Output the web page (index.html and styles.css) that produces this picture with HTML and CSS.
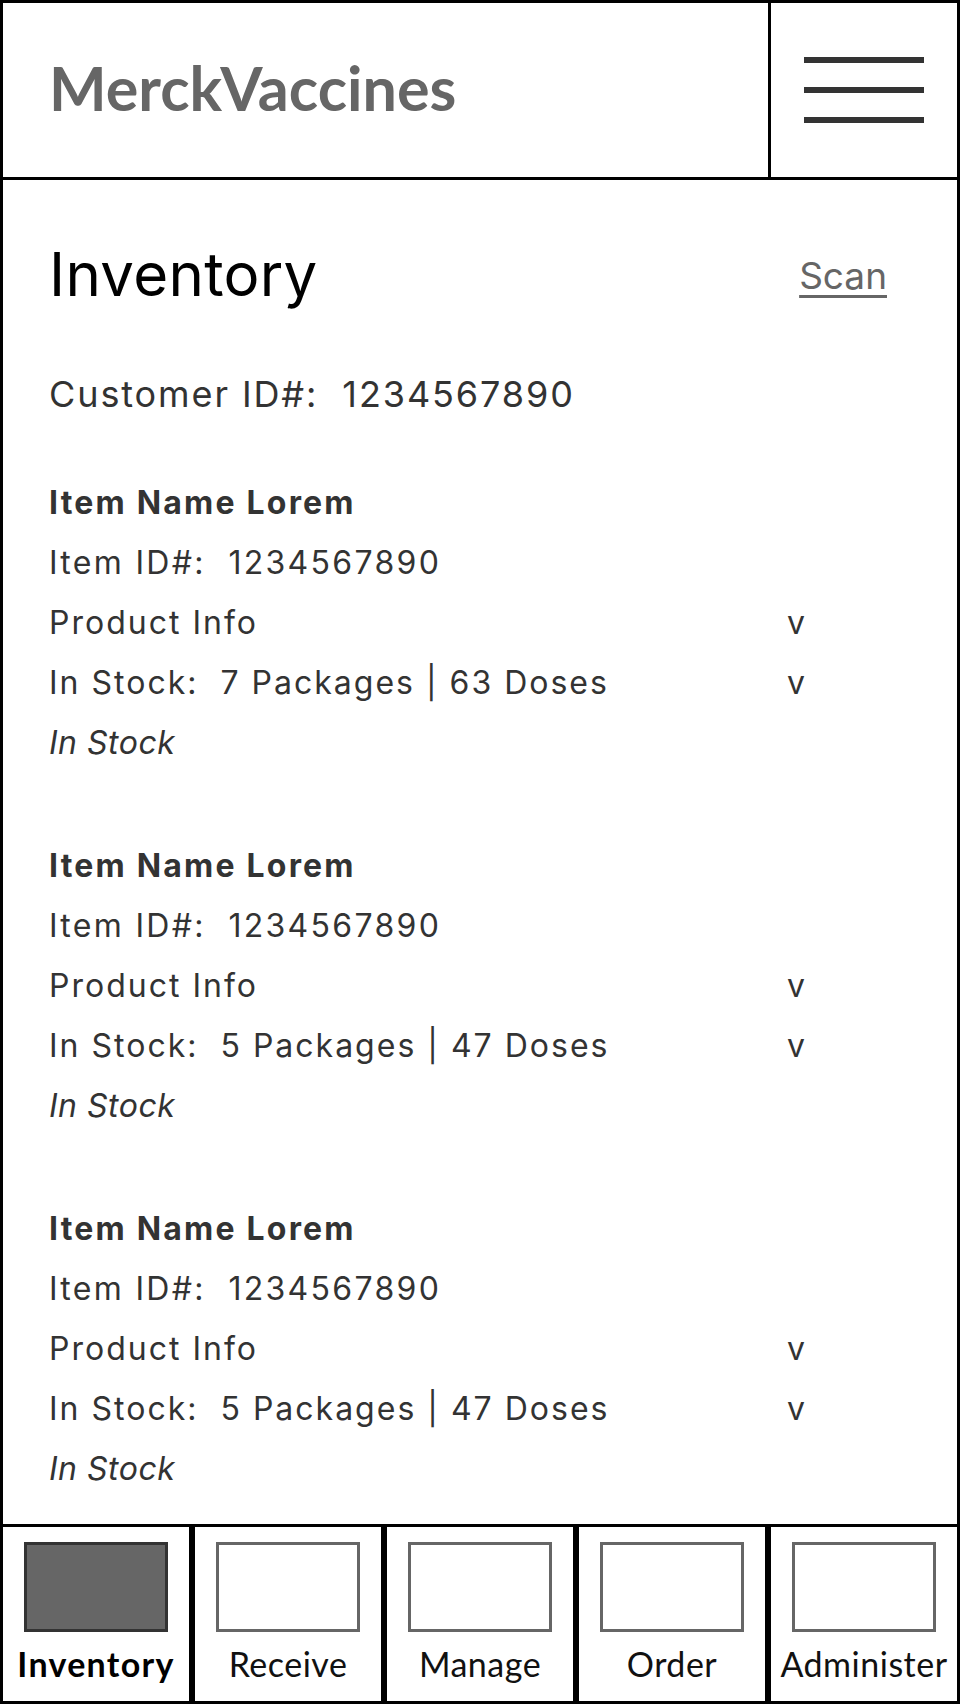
FILE: index.html
```html
<!DOCTYPE html>
<html lang="en">
<head>
<meta charset="utf-8">
<title>MerckVaccines - Inventory</title>
<link rel="stylesheet" href="styles.css">
</head>
<body>
<div class="page">
  <header class="header">
    <div class="logo-cell"><span class="logo">MerckVaccines</span></div>
    <div class="menu-cell">
      <div class="burger"><span></span><span></span><span></span></div>
    </div>
  </header>

  <main class="main">
    <div class="title-row">
      <h1 class="title">Inventory</h1>
      <a class="scan" href="#">Scan</a>
    </div>
    <p class="customer">Customer ID#:&nbsp; 1234567890</p>

    <section class="item">
      <div class="row name">Item Name Lorem</div>
      <div class="row id">Item ID#:&nbsp; 1234567890</div>
      <div class="row"><span>Product Info</span><span class="caret">v</span></div>
      <div class="row"><span>In Stock:&nbsp; 7 Packages | 63 Doses</span><span class="caret">v</span></div>
      <div class="row status">In Stock</div>
    </section>

    <section class="item">
      <div class="row name">Item Name Lorem</div>
      <div class="row id">Item ID#:&nbsp; 1234567890</div>
      <div class="row"><span>Product Info</span><span class="caret">v</span></div>
      <div class="row"><span>In Stock:&nbsp; 5 Packages | 47 Doses</span><span class="caret">v</span></div>
      <div class="row status">In Stock</div>
    </section>

    <section class="item">
      <div class="row name">Item Name Lorem</div>
      <div class="row id">Item ID#:&nbsp; 1234567890</div>
      <div class="row"><span>Product Info</span><span class="caret">v</span></div>
      <div class="row"><span>In Stock:&nbsp; 5 Packages | 47 Doses</span><span class="caret">v</span></div>
      <div class="row status">In Stock</div>
    </section>
  </main>

  <nav class="tabs">
    <a class="tab active" href="#"><span class="tab-icon"></span><span class="tab-label">Inventory</span></a>
    <a class="tab" href="#"><span class="tab-icon"></span><span class="tab-label">Receive</span></a>
    <a class="tab" href="#"><span class="tab-icon"></span><span class="tab-label">Manage</span></a>
    <a class="tab" href="#"><span class="tab-icon"></span><span class="tab-label">Order</span></a>
    <a class="tab" href="#"><span class="tab-icon"></span><span class="tab-label">Administer</span></a>
  </nav>
</div>
</body>
</html>
```

FILE: styles.css
```css
* { box-sizing: border-box; }

html, body {
  margin: 0;
  padding: 0;
  background: #fff;
}

.page {
  width: 960px;
  height: 1704px;
  border: 3px solid #000;
  display: flex;
  flex-direction: column;
  font-family: Inter, "Liberation Sans", sans-serif;
  color: #333;
  overflow: hidden;
}

/* Header */
.header {
  height: 177px;
  border-bottom: 3px solid #000;
  display: flex;
  flex: none;
}

.logo-cell {
  flex: 1;
  padding: 48px 0 0 46px;
}

.logo {
  font-family: Lato, "Liberation Sans", sans-serif;
  font-weight: 700;
  font-size: 61px;
  line-height: 73px;
  color: #666;
  display: block;
}

.menu-cell {
  width: 189px;
  border-left: 3px solid #000;
  display: flex;
  align-items: center;
  justify-content: center;
}

.burger {
  width: 120px;
  display: flex;
  flex-direction: column;
  gap: 24px;
}

.burger span {
  display: block;
  height: 6px;
  background: #333;
}

/* Main */
.main {
  flex: 1;
  padding: 58px 70px 0 46px;
}

.title-row {
  display: flex;
  justify-content: space-between;
  align-items: flex-start;
}

.title {
  margin: 0;
  font-family: Inter, "Liberation Sans", sans-serif;
  font-weight: 400;
  font-size: 60px;
  line-height: 72px;
  letter-spacing: 0.3px;
  color: #000;
}

.scan {
  margin-top: 16px;
  font-size: 37px;
  line-height: 44px;
  color: #666;
  text-decoration: underline;
  text-decoration-thickness: 3px;
  text-underline-offset: 6px;
}

.customer {
  margin: 62px 0 0;
  font-size: 36px;
  line-height: 44px;
  letter-spacing: 1.9px;
  color: #333;
}

.item {
  margin-top: 57px;
}

.item + .item {
  margin-top: 63px;
}

.row {
  display: grid;
  grid-template-columns: 738px auto;
  font-size: 32px;
  line-height: 60px;
  height: 60px;
  letter-spacing: 2px;
  white-space: nowrap;
}

.row.id {
  letter-spacing: 2.3px;
}

.row.name {
  font-weight: 700;
  letter-spacing: 2.2px;
}

.row.status {
  font-style: italic;
  letter-spacing: 0.5px;
}

.caret {
  color: #333;
  letter-spacing: 0;
}

/* Tabs */
.tabs {
  flex: none;
  height: 177px;
  border-top: 3px solid #000;
  display: flex;
}

.tab {
  width: 186px;
  flex: none;
  display: flex;
  flex-direction: column;
  align-items: center;
  padding-top: 15px;
  text-decoration: none;
  color: #000;
  font-family: Lato, "Liberation Sans", sans-serif;
}

.tab + .tab {
  width: 192px;
  border-left: 6px solid #000;
}

.tab-icon {
  width: 144px;
  height: 90px;
  border: 3px solid #666;
  background: #fff;
}

.tab.active .tab-icon {
  border-color: #333;
  background: #666;
}

.tab-label {
  margin-top: 12px;
  font-size: 34px;
  line-height: 40px;
  letter-spacing: 0.5px;
  color: #111;
  white-space: nowrap;
}

.tab.active .tab-label {
  font-weight: 700;
  letter-spacing: 1.3px;
  color: #000;
}
```
